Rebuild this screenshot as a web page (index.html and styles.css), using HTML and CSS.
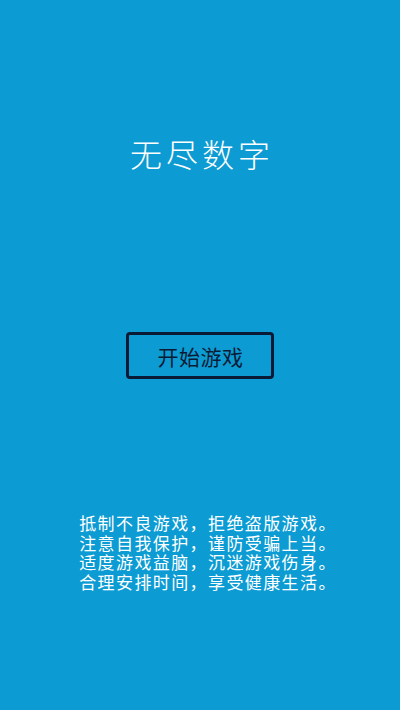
FILE: index.html
```html
<!DOCTYPE html>
<html lang="zh-CN">
<head>
<meta charset="utf-8">
<title>无尽数字</title>
<link rel="stylesheet" href="styles.css">
</head>
<body>
<main class="screen">
  <h1 class="title">无尽数字</h1>
  <button class="start">开始游戏</button>
  <p class="notice">抵制不良游戏，拒绝盗版游戏。<br>注意自我保护，谨防受骗上当。<br>适度游戏益脑，沉迷游戏伤身。<br>合理安排时间，享受健康生活。</p>
</main>
</body>
</html>
```
FILE: styles.css
```css
html, body {
  margin: 0;
  padding: 0;
  background: #0c9bd2;
}
.screen {
  width: 400px;
  height: 710px;
  display: flex;
  flex-direction: column;
  align-items: center;
  font-family: "Noto Sans CJK SC", "Noto Sans", sans-serif;
  background: #0c9bd2;
}
.title {
  margin: 133px 0 0;
  padding-left: 4px;
  font-size: 32px;
  line-height: 40px;
  font-weight: 300;
  color: #ffffff;
  letter-spacing: 4px;
}
.start {
  margin-top: 159px;
  width: 148px;
  height: 47px;
  box-sizing: border-box;
  border: 3px solid #0b1b36;
  border-radius: 4px;
  background: transparent;
  color: #0b1b36;
  font-family: inherit;
  font-size: 21px;
  letter-spacing: 0.5px;
  font-weight: 400;
  padding: 0 0 0 1px;
}
.notice {
  margin: 134px 0 0 16px;
  font-size: 17px;
  line-height: 19.5px;
  letter-spacing: 1.4px;
  color: #ffffff;
  text-align: left;
}
```
